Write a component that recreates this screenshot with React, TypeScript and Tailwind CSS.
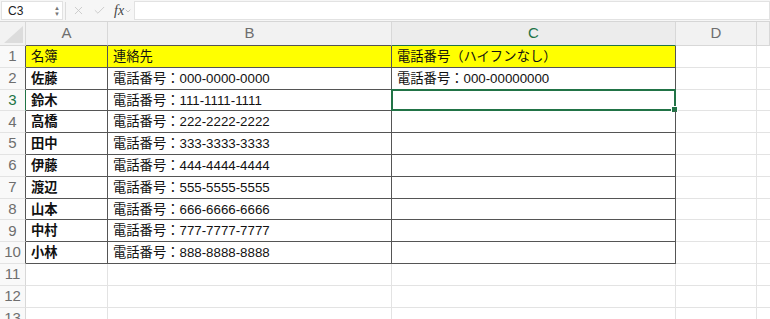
import { ChevronDown, Check, X } from "lucide-react"

const font = "font-['Liberation_Sans','Noto_Sans_CJK_JP',sans-serif]"

const rows: [string, string, string][] = [
  ["名簿", "連絡先", "電話番号（ハイフンなし）"],
  ["佐藤", "電話番号：000-0000-0000", "電話番号：000-00000000"],
  ["鈴木", "電話番号：111-1111-1111", ""],
  ["高橋", "電話番号：222-2222-2222", ""],
  ["田中", "電話番号：333-3333-3333", ""],
  ["伊藤", "電話番号：444-4444-4444", ""],
  ["渡辺", "電話番号：555-5555-5555", ""],
  ["山本", "電話番号：666-6666-6666", ""],
  ["中村", "電話番号：777-7777-7777", ""],
  ["小林", "電話番号：888-8888-8888", ""],
]

function FormulaBar() {
  return (
    <div className="flex h-[22px] items-center border-b border-[#d6d6d6] bg-[#f6f6f6]">
      <div className="ml-[1px] flex h-[19px] w-[62px] items-center justify-between border border-[#e2e2e2] bg-white pl-[6px] pr-[2px] text-[12px] text-[#222]">
        <span>C3</span>
        <div className="flex flex-col items-center leading-none text-[#777]">
          <span className="text-[6px]">▲</span>
          <span className="text-[6px]">▼</span>
        </div>
      </div>
      <div className="ml-[2px] h-[18px] w-px bg-[#dcdcdc]" />
      <div className="flex w-[68px] items-center gap-[8px] pl-[6px] text-[#c4c4c4]">
        <X className="h-[13px] w-[13px]" strokeWidth={1.5} />
        <Check className="h-[13px] w-[13px]" strokeWidth={1.5} />
        <div className="flex items-center text-[#444]">
          <span className="font-['Liberation_Serif',serif] text-[14px] italic">fx</span>
          <ChevronDown className="h-[8px] w-[8px] text-[#aaa]" />
        </div>
      </div>
      <div className="h-[19px] flex-1 border border-[#e2e2e2] bg-white" />
    </div>
  )
}

export default function App() {
  const cols = ["A", "B", "C", "D", ""]
  return (
    <div className={`h-[319px] w-[770px] overflow-hidden bg-white ${font}`}>
      <FormulaBar />
      <div className="grid grid-cols-[26px_82px_284px_284px_81px_1fr] grid-rows-[24px_repeat(13,21.8px)]">
        {/* corner */}
        <div className="relative border-r border-b border-[#d8d8d8] bg-[#f2f2f2]">
          <svg className="absolute bottom-[2px] right-[2px]" width="19" height="17" viewBox="0 0 19 17">
            <polygon points="19,0 19,17 0,17" fill="#dcdcdc" />
          </svg>
        </div>
        {cols.map((c, i) => (
          <div
            key={i}
            className={`flex items-center justify-center border-r border-[#d8d8d8] text-[15px] ${
              c === "C"
                ? "border-b border-b-[#217346] bg-[#ececec] text-[#217346]"
                : c === "A" || c === "B"
                  ? "border-b border-b-[#555] bg-[#f2f2f2] text-[#6e6e6e]"
                  : "border-b border-b-[#d8d8d8] bg-[#f2f2f2] text-[#6e6e6e]"
            }`}
          >
            {c}
          </div>
        ))}
        {Array.from({ length: 13 }).map((_, r) => {
          const data = rows[r]
          const inTable = r < 10
          const selRow = r === 2
          return [
            <div
              key={`h${r}`}
              className={`flex items-center justify-center border-b border-b-[#e3e3e3] border-r text-[15px] bg-[#f9f9f9] ${
                selRow
                  ? "border-r-[#217346] text-[#217346]"
                  : inTable
                    ? "border-r-[#555] text-[#6e6e6e]"
                    : "border-r-[#d8d8d8] text-[#6e6e6e]"
              }`}
            >
              {r + 1}
            </div>,
            ...[0, 1, 2].map((ci) => (
              <div
                key={`c${r}-${ci}`}
                className={`relative flex items-center overflow-visible whitespace-nowrap border-r border-b pl-[5px] pt-[1px] text-[13.3px] text-[#111] ${
                  inTable ? "border-[#555]" : "border-[#e3e3e3]"
                } ${r === 0 ? "bg-[#ffff00]" : ""} ${ci === 0 && r > 0 && inTable ? "font-semibold" : ""}`}
              >
                {data ? data[ci] : ""}
                {r === 2 && ci === 2 && (
                  <div className="absolute -left-px -top-px bottom-[-1px] right-[-1px] border-2 border-[#217346]">
                    <div className="absolute -bottom-[3px] -right-[3px] h-[5px] w-[5px] bg-[#217346] ring-1 ring-white" />
                  </div>
                )}
              </div>
            )),
            <div key={`d${r}`} className="border-r border-b border-[#e3e3e3]" />,
            <div key={`e${r}`} className="border-b border-[#e3e3e3]" />,
          ]
        })}
      </div>
    </div>
  )
}
